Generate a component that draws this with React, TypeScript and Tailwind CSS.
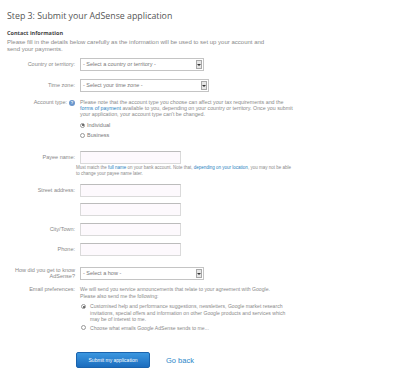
import React from "react";

const label = "w-[71px] shrink-0 text-right pr-[3px] text-[#888]";

function Select({ text, w }: { text: string; w: string }) {
  return (
    <div className={`${w} h-[13px] border border-[#c4c4c4] bg-white flex items-center justify-between pl-[2px] pr-[1px]`}>
      <span className="text-[#777]">{text}</span>
      <span className="w-[6px] h-[9px] bg-[#e6e6e6] border border-[#a8a8a8] flex items-center justify-center">
        <span className="w-0 h-0 border-l-[2px] border-r-[2px] border-t-[2px] border-l-transparent border-r-transparent border-t-[#333]" />
      </span>
    </div>
  );
}

function Input() {
  return <div className="w-[101px] h-[13px] border border-[#dadada] border-t-[#bcbcbc] bg-[#fdf9fd]" />;
}

function Radio({ on }: { on?: boolean }) {
  return (
    <span className="w-[5px] h-[5px] rounded-full border border-[#999] bg-white flex items-center justify-center shrink-0">
      {on && <span className="w-[2px] h-[2px] rounded-full bg-[#444]" />}
    </span>
  );
}

function Row({ name, children, className = "" }: { name: React.ReactNode; children: React.ReactNode; className?: string }) {
  return (
    <div className={`flex items-center ${className}`}>
      <div className={label}>{name}</div>
      <div className="ml-[2px]">{children}</div>
    </div>
  );
}

export default function App() {
  const link = "text-[#2a7fc1]";
  return (
    <div className="w-[400px] h-[382px] bg-white overflow-hidden pl-[7px] text-[5.5px] leading-[7px] text-[#8a8a8a]" style={{ fontFamily: '"Liberation Sans", Arial, sans-serif' }}>
      <h1 className="pt-[10px] text-[8.8px] leading-[13px] text-[#555]" style={{ fontFamily: '"Open Sans", sans-serif' }}>
        Step 3: Submit your AdSense application
      </h1>
      <div className="mt-[7px] font-bold text-[#444] text-[5.5px] leading-[7px]" style={{ fontFamily: '"Open Sans", sans-serif' }}>Contact information</div>
      <p className="mt-[2px] w-[262px] text-[6px]">
        Please fill in the details below carefully as the information will be used to set up your account and send your payments.
      </p>

      <Row name="Country or territory:" className="mt-[5px]">
        <Select text="- Select a country or territory -" w="w-[124px]" />
      </Row>
      <Row name="Time zone:" className="mt-[8px]">
        <Select text="- Select your time zone -" w="w-[129px]" />
      </Row>

      <div className="flex mt-[7px]">
        <div className={`${label} flex justify-end items-start gap-[2px]`}>
          Account type:
          <span className="w-[6px] h-[6px] mt-[0.5px] rounded-full bg-[#6a96cc] text-white text-[4px] leading-[6px] text-center font-bold">?</span>
        </div>
        <div className="ml-[2px] w-[216px] leading-[6px]">
          <p className="text-[5.3px]">
            Please note that the account type you choose can affect your tax requirements and the{" "}
            <span className={link}>forms of payment</span> available to you, depending on your country or territory. Once you submit your application, your account type can't be changed.
          </p>
          <div className="flex items-center gap-[2px] mt-[5px] text-[#777]"><Radio on /> Individual</div>
          <div className="flex items-center gap-[2px] mt-[4px] text-[#777]"><Radio /> Business</div>
        </div>
      </div>

      <Row name="Payee name:" className="mt-[13px]">
        <Input />
      </Row>
      <p className="ml-[69px] mt-[1px] w-[216px] text-[4.5px] leading-[6px]">
        Must match the <span className={link}>full name</span> on your bank account. Note that, <span className={link}>depending on your location</span>, you may not be able to change your payee name later.
      </p>
      <Row name="Street address:" className="mt-[7px]"><Input /></Row>
      <Row name="" className="mt-[6px]"><Input /></Row>
      <Row name="City/Town:" className="mt-[7px]"><Input /></Row>
      <Row name="Phone:" className="mt-[7px]"><Input /></Row>

      <div className="flex items-start mt-[11px]">
        <div className={`${label} leading-[6px]`}>How did you get to know AdSense?</div>
        <div className="ml-[2px]"><Select text="- Select a how -" w="w-[124px]" /></div>
      </div>

      <div className="flex mt-[6px]">
        <div className={label}>Email preferences:</div>
        <div className="ml-[2px] w-[214px] leading-[6.5px] text-[5.1px]">
          <p>
            We will send you service announcements that relate to your agreement with Google.
            <br />
            Please also send me the following:
          </p>
          <div className="flex items-start gap-[4px] mt-[4px]">
            <span className="mt-[1px] ml-[1px]"><Radio on /></span>
            <span>Customised help and performance suggestions, newsletters, Google market research invitations, special offers and information on other Google products and services which may be of interest to me.</span>
          </div>
          <div className="flex items-center gap-[4px] mt-[2px] ml-[1px]">
            <Radio /> Choose what emails Google AdSense sends to me...
          </div>
        </div>
      </div>

      <div className="flex items-center ml-[69px] mt-[21px] gap-[16px]">
        <button className="w-[74px] h-[16px] rounded-[2px] bg-gradient-to-b from-[#3b97e0] to-[#1b6cbd] border border-[#1a63ad] text-white text-[5px]">
          Submit my application
        </button>
        <span className="text-[7.5px] text-[#2a86c8]">Go back</span>
      </div>
    </div>
  );
}
